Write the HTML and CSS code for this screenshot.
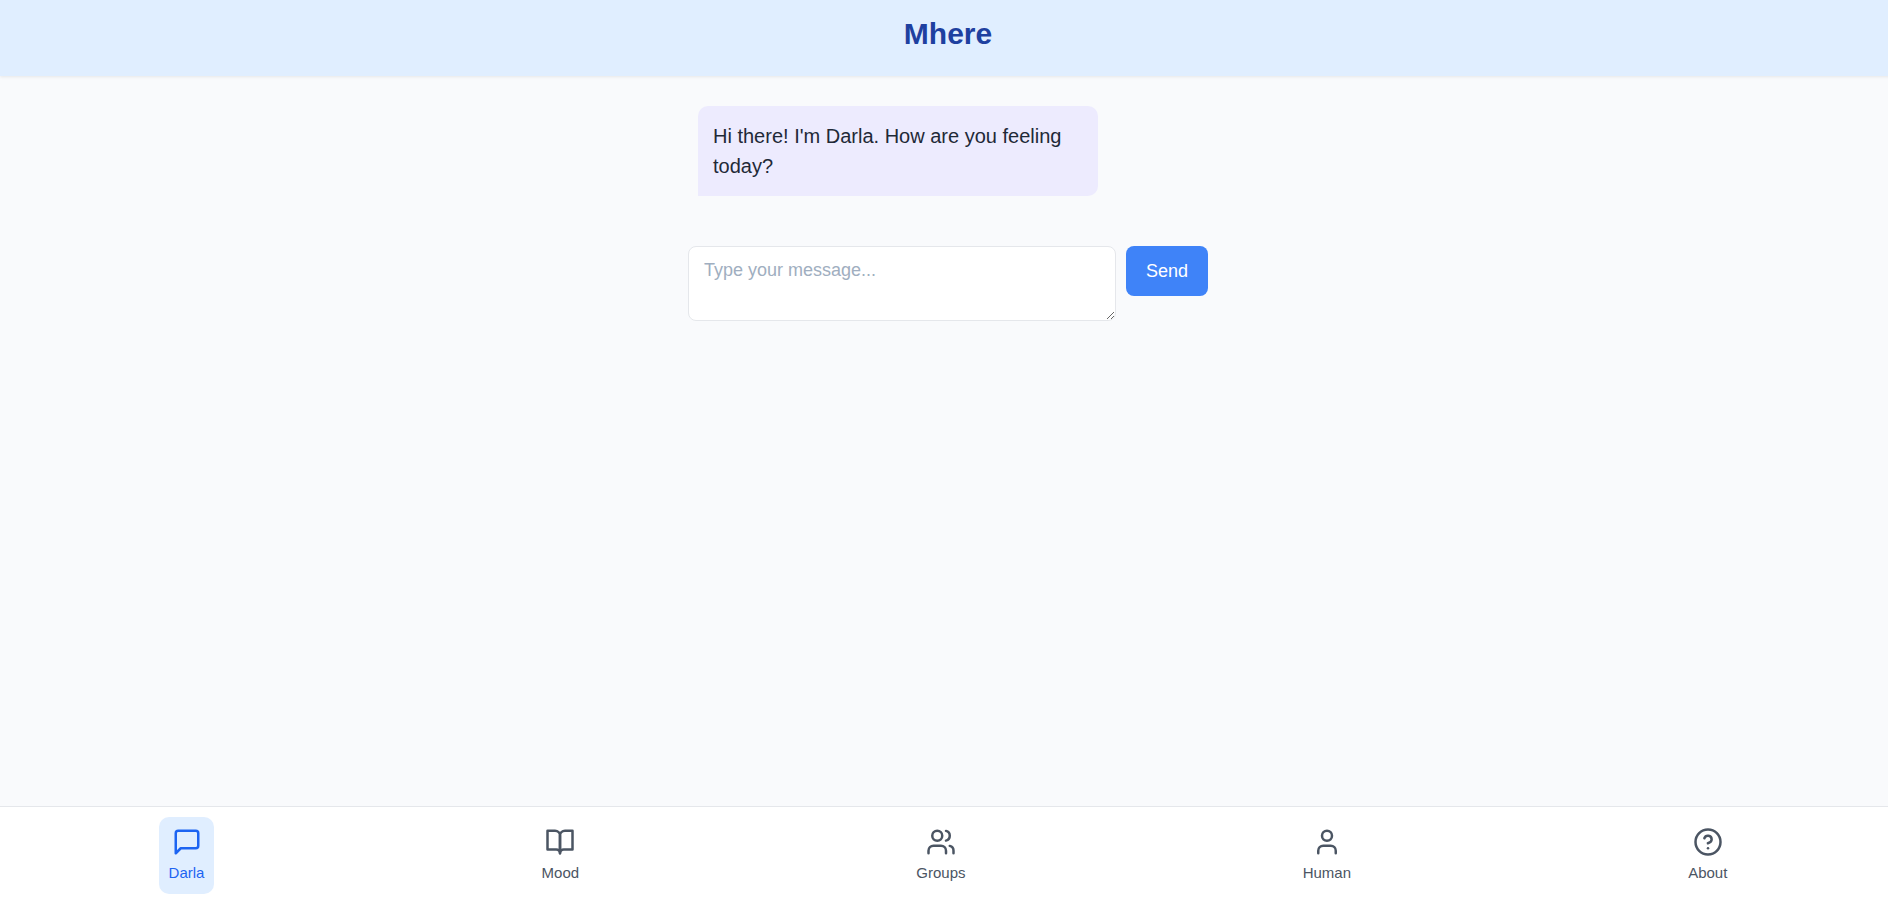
FILE: index.html
```
<!DOCTYPE html>
<html lang="en">
<head>
    <meta charset="UTF-8">
    <meta name="viewport" content="width=device-width, initial-scale=1.0">
    <title>Mhere</title>
    <link rel="stylesheet" href="styles.css">
</head>
<body>
    <header class="header">
        <h1>Mhere</h1>
    </header>

    <main class="chat">
        <div class="messages">
            <p class="message bot">Hi there! I'm Darla. How are you feeling today?</p>
        </div>
        <form class="message-form" onsubmit="return false">
            <textarea class="message-input" aria-label="Message" placeholder="Type your message..."></textarea>
            <button type="submit" class="send">Send</button>
        </form>
    </main>

    <!-- Bottom navigation -->
    <nav class="nav">
        <a href="#darla" class="nav-item active">
            <svg class="icon" viewBox="0 0 24 24"><path d="M21 15a2 2 0 0 1-2 2H7l-4 4V5a2 2 0 0 1 2-2h14a2 2 0 0 1 2 2z"/></svg>
            <span>Darla</span>
        </a>
        <a href="#mood" class="nav-item">
            <svg class="icon" viewBox="0 0 24 24"><path d="M2 3h6a4 4 0 0 1 4 4v14a3 3 0 0 0-3-3H2z"/><path d="M22 3h-6a4 4 0 0 0-4 4v14a3 3 0 0 1 3-3h7z"/></svg>
            <span>Mood</span>
        </a>
        <a href="#groups" class="nav-item">
            <svg class="icon" viewBox="0 0 24 24"><path d="M16 21v-2a4 4 0 0 0-4-4H6a4 4 0 0 0-4 4v2"/><circle cx="9" cy="7" r="4"/><path d="M22 21v-2a4 4 0 0 0-3-3.87"/><path d="M16 3.13a4 4 0 0 1 0 7.75"/></svg>
            <span>Groups</span>
        </a>
        <a href="#human" class="nav-item">
            <svg class="icon" viewBox="0 0 24 24"><path d="M19 21v-2a4 4 0 0 0-4-4H9a4 4 0 0 0-4 4v2"/><circle cx="12" cy="7" r="4"/></svg>
            <span>Human</span>
        </a>
        <a href="#about" class="nav-item">
            <svg class="icon" viewBox="0 0 24 24"><circle cx="12" cy="12" r="10"/><path d="M9.09 9a3 3 0 0 1 5.83 1c0 2-3 3-3 3"/><path d="M12 17h.01"/></svg>
            <span>About</span>
        </a>
    </nav>
</body>
</html>
```
FILE: styles.css
```
* {
    box-sizing: border-box;
}

html {
    overflow: hidden;
}

body {
    display: flex;
    flex-direction: column;
    height: 100vh;
    margin: 0 -8px 0 0;
    font-family: "Liberation Sans", Arial, Helvetica, sans-serif;
    font-size: 20px;
    line-height: 30px;
    color: #1f2937;
    background: #f9fafc;
}

.header {
    padding: 16px 16px 24px;
    text-align: center;
    background: #e0eeff;
    box-shadow: 0 1px 3px rgba(0, 0, 0, 0.08);
}

.header h1 {
    margin: 0;
    font-size: 30px;
    line-height: 36px;
    color: #1e40a0;
}

.chat {
    flex: 1;
    width: 100%;
    max-width: 520px;
    margin: 0 auto;
    padding-top: 30px;
}

.messages {
    padding: 0 10px;
    margin-bottom: 50px;
}

.message {
    max-width: 80%;
    margin: 0;
    padding: 15px;
    border-radius: 10px;
}

.bot {
    background: #edebfe;
    border-bottom-left-radius: 0;
}

.message-form {
    display: flex;
    align-items: flex-start;
    gap: 10px;
}

.message-input {
    flex: 1;
    height: 75px;
    padding: 10px 15px;
    font: inherit;
    font-size: 18px;
    line-height: 27px;
    color: inherit;
    background: #fff;
    border: 1px solid #e5e7eb;
    border-radius: 8px;
    resize: vertical;
}

.message-input::placeholder {
    color: #a0aec0;
}

.send {
    padding: 10px 20px;
    font: inherit;
    font-size: 18px;
    line-height: 30px;
    color: #fff;
    background: #3f83f8;
    border: none;
    border-radius: 8px;
    cursor: pointer;
}

.nav {
    display: flex;
    justify-content: space-around;
    padding: 10px 0 3px;
    background: #fff;
    border-top: 1px solid #e5e7eb;
}

.nav-item {
    display: flex;
    flex-direction: column;
    align-items: center;
    gap: 5px;
    padding: 10px;
    font-size: 15px;
    line-height: 22px;
    color: #4b5563;
    text-decoration: none;
    border-radius: 10px;
}

.nav-item.active {
    color: #1c64f2;
    background: #e0eeff;
}

.icon {
    width: 30px;
    height: 30px;
    fill: none;
    stroke: currentColor;
    stroke-width: 2;
    stroke-linecap: round;
    stroke-linejoin: round;
}
```
